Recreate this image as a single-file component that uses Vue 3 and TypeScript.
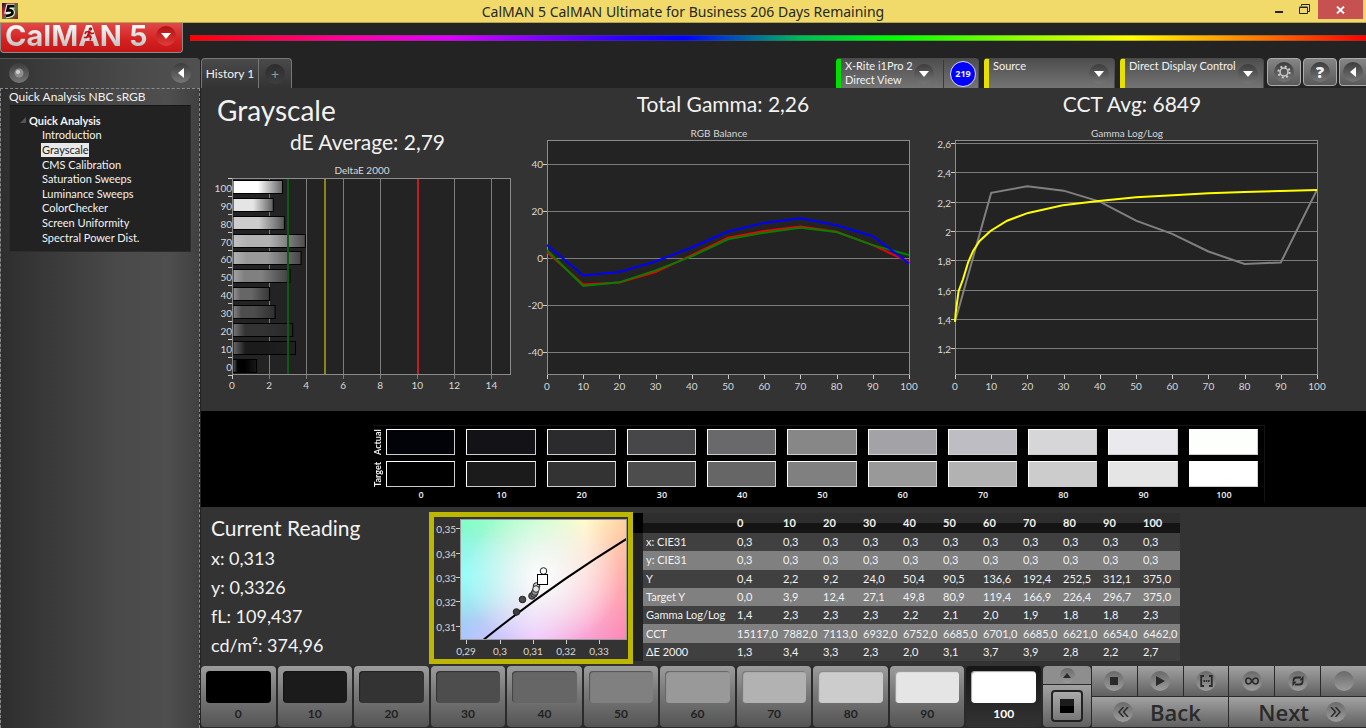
<script setup lang="ts">
interface Device {
  lines: string[]
  status: 'ready' | 'idle'
  badge?: string
}

interface Bar {
  level: number
  value: number
  color: string
}

const pages = [
  'Introduction',
  'Grayscale',
  'CMS Calibration',
  'Saturation Sweeps',
  'Luminance Sweeps',
  'ColorChecker',
  'Screen Uniformity',
  'Spectral Power Dist.',
]
const currentPage = 'Grayscale'

const devices: Device[] = [
  { lines: ['X-Rite i1Pro 2', 'Direct View'], status: 'ready', badge: '219' },
  { lines: ['Source'], status: 'idle' },
  { lines: ['Direct Display Control'], status: 'idle' },
]

const levels = [0, 10, 20, 30, 40, 50, 60, 70, 80, 90, 100]
const actual = ['#020308', '#131217', '#2b2b2d', '#474749', '#69696b', '#878788', '#a3a2a7', '#bebdc3', '#d6d6d8', '#eae9ee', '#fdfffc']
const target = ['#000000', '#1b1b1b', '#333333', '#4d4d4d', '#666666', '#808080', '#999999', '#b2b2b2', '#cccccc', '#e5e5e5', '#ffffff']

const rows: { name: string; values: string[] }[] = [
  { name: 'x: CIE31', values: levels.map(() => '0,3') },
  { name: 'y: CIE31', values: levels.map(() => '0,3') },
  { name: 'Y', values: ['0,4', '2,2', '9,2', '24,0', '50,4', '90,5', '136,6', '192,4', '252,5', '312,1', '375,0'] },
  { name: 'Target Y', values: ['0,0', '3,9', '12,4', '27,1', '49,8', '80,9', '119,4', '166,9', '226,4', '296,7', '375,0'] },
  { name: 'Gamma Log/Log', values: ['1,4', '2,3', '2,3', '2,3', '2,2', '2,1', '2,0', '1,9', '1,8', '1,8', '2,3'] },
  { name: 'CCT', values: ['15117,0', '7882,0', '7113,0', '6932,0', '6752,0', '6685,0', '6701,0', '6685,0', '6621,0', '6654,0', '6462,0'] },
  { name: 'ΔE 2000', values: ['1,3', '3,4', '3,3', '2,3', '2,0', '3,1', '3,7', '3,9', '2,8', '2,2', '2,7'] },
]

const readings = ['x: 0,313', 'y: 0,3326', 'fL: 109,437', 'cd/m²: 374,96']

/* Delta E bars: plot area 279 x 197, starting at (30, 23) */
const deltaE = [1.3, 3.4, 3.25, 2.3, 2.0, 3.1, 3.7, 3.93, 2.8, 2.2, 2.7]
const bars: Bar[] = levels.map((level, i) => ({ level, value: deltaE[i], color: target[i] })).reverse()
const deX = (v: number) => 30 + v * 18.53
const barY = (i: number) => Math.round(25 + i * 17.85)
const barEdge = (b: Bar) => {
  const gray = Math.round(88 + b.level * 1.5)
  return b.level > 70 ? b.color : `rgb(${gray}, ${gray}, ${gray})`
}

/* RGB balance: plot area 362 x 235, starting at (25, 19) */
const rgbX = (v: number) => 25 + v * 3.62
const rgbY = (v: number) => 137 - v * 2.34
const rgbTicks = [40, 20, 0, -20, -40]
const balance = {
  red: [2.5, -11.3, -10.5, -6, 1.2, 8.7, 11.5, 13.5, 11.2, 5.5, -1.7],
  green: [3.3, -12, -10.4, -5.3, 0.7, 8, 10.8, 12.9, 11.1, 5.5, 1.3],
  blue: [5.6, -7.5, -6, -1.5, 4.5, 11.3, 15, 17, 14, 9.3, -2.3],
}
const balanceLine = (values: number[]) => values.map((v, i) => `${rgbX(i * 10)},${rgbY(v)}`).join(' ')

/* Gamma: plot area 362 x 235, starting at (35, 19) */
const gmX = (v: number) => 35 + v * 3.62
const gmY = (v: number) => 22 + (2.6 - v) * 146.6
const gmTicks = [2.6, 2.4, 2.2, 2, 1.8, 1.6, 1.4, 1.2]
const gammaMeasured: [number, number][] = [
  [0, 1.38], [10, 2.26], [20, 2.305], [30, 2.275], [40, 2.2], [50, 2.07],
  [60, 1.98], [70, 1.86], [80, 1.775], [90, 1.785], [100, 2.28],
]
const gammaTarget: [number, number][] = [
  [0, 1.38], [0.2, 1.443], [1, 1.59], [2.2, 1.67], [3.6, 1.784], [5, 1.864], [6.8, 1.932], [9.8, 2.0], [14.4, 2.07],
  [20.2, 2.123], [29.8, 2.175], [39, 2.202], [50, 2.23], [60.2, 2.243], [70, 2.257], [80, 2.266], [90, 2.273], [100, 2.28],
]
const gammaLine = (points: [number, number][]) => points.map(([x, y]) => `${gmX(x)},${gmY(y)}`).join(' ')

const comma = (v: number) => String(v).replace('.', ',')

/* Chromaticity: plot area 167 x 121, starting at (26, 2) */
const cieX = [[0.29, 32], [0.3, 66], [0.31, 99], [0.32, 132], [0.33, 165]]
const cieY = [[0.35, 12], [0.34, 37], [0.33, 61], [0.32, 85], [0.31, 110]]
const ciePoints = [
  [82.5, 95, '#3c3c3c'], [88.5, 82.5, '#4b4b4b'], [98, 79, '#666666'], [100, 77, '#808080'],
  [101, 75, '#999999'], [102.5, 69, '#cccccc'], [102, 72, '#e5e5e5'], [109.5, 54, '#ffffff'],
]
</script>

<template>
  <div class="app">
    <header class="titlebar">
      <svg class="app-icon" viewBox="0 0 16 16" aria-hidden="true">
        <defs>
          <linearGradient id="appicon" x1="0" y1="0" x2="1" y2="1">
            <stop offset="0" stop-color="#26122a" />
            <stop offset="0.35" stop-color="#b8274c" />
            <stop offset="0.6" stop-color="#4f7a3a" />
            <stop offset="1" stop-color="#8c1620" />
          </linearGradient>
        </defs>
        <rect width="16" height="16" fill="url(#appicon)" />
        <path d="M12.500 3.200H6.500L5.500 7.500q5-1 5 2T4 12.800" fill="none" stroke="#e8f0dc" stroke-width="5" />
        <path d="M12.500 3.200H6.500L5.500 7.500q5-1 5 2T4 12.800" fill="none" stroke="#080808" stroke-width="2.800" />
      </svg>
      <h1 class="window-title">CalMAN 5 CalMAN Ultimate for Business 206 Days Remaining</h1>
      <div class="window-controls">
        <button class="win-btn" aria-label="Minimize"><svg width="10" height="12" viewBox="0 0 10 12"><path d="M1 7h8v2H1z" fill="#222" /></svg></button>
        <button class="win-btn" aria-label="Restore">
          <svg width="12" height="12" viewBox="0 0 12 12"><path d="M2.500 2V.5h8v7H9" fill="none" stroke="#222" /><path d="M.5 3.500h8v6h-8zM.5 3h8" fill="none" stroke="#222" /></svg>
        </button>
        <button class="win-btn close" aria-label="Close"><svg width="9" height="8" viewBox="0 0 9 8"><path d="M1 .5l7 7M8 .5l-7 7" stroke="#fff" stroke-width="1.800" /></svg></button>
      </div>
    </header>

    <div class="brandbar">
      <button class="logo" aria-label="CalMAN 5 menu">
        <span class="logo-text">CalMAN</span>
        <span class="logo-text">5</span>
        <svg class="runner" viewBox="0 0 12 14" aria-hidden="true">
          <circle cx="7.500" cy="2" r="1.700" fill="#b01216" />
          <path d="M6.500 4.500L5 8l3 2-1 3.500M5 8l-1.500 2.500H.8M6.500 4.500L3 5 1.800 7M6.500 4.500l2 2.200 2.500-.7" fill="none" stroke="#b01216" stroke-width="1.500" />
        </svg>
        <span class="round logo-drop"><svg width="10" height="6" viewBox="0 0 10 6"><path d="M0 0h10L5 6z" fill="#fff" /></svg></span>
      </button>
      <div class="spectrum"></div>
    </div>

    <div class="workspace">
      <aside class="sidebar">
        <div class="side-head">
          <button class="round" aria-label="Record"><svg width="10" height="10" viewBox="0 0 10 10"><circle cx="5" cy="5" r="4.500" fill="#8f8f8f" /><circle cx="4" cy="4" r="2" fill="#d2d2d2" /></svg></button>
          <button class="round" aria-label="Collapse panel"><svg width="6" height="10" viewBox="0 0 6 10"><path d="M6 0v10L0 5z" fill="#fff" /></svg></button>
        </div>
        <div class="side-body">
          <h2 class="side-title">Quick Analysis NBC sRGB</h2>
          <nav class="tree" aria-label="Workflow">
            <div class="tree-root"><svg width="6" height="6" viewBox="0 0 6 6"><path d="M6 0v6H0z" fill="#555" /></svg>Quick Analysis</div>
            <ul>
              <li v-for="page in pages" :key="page"><a href="#" :class="{ current: page === currentPage }">{{ page }}</a></li>
            </ul>
          </nav>
        </div>
      </aside>

      <main class="main">
        <div class="tabbar">
          <div class="tabs">
            <button class="tab">History 1</button>
            <button class="tab add" aria-label="Add tab"><span class="round dark">+</span></button>
          </div>
          <div class="devices">
            <div v-for="(d, i) in devices" :key="i" class="device" :class="[d.status, `device-${i}`]">
              <span class="device-name"><span v-for="l in d.lines" :key="l">{{ l }}</span></span>
              <button class="round drop" :aria-label="`${d.lines[0]} menu`"><svg width="10" height="6" viewBox="0 0 10 6"><path d="M0 0h10L5 6z" fill="#fff" /></svg></button>
              <span v-if="d.badge" class="badge-box"><span class="badge">{{ d.badge }}</span></span>
            </div>
          </div>
          <div class="tools">
            <button class="tool" aria-label="Settings">
              <span class="round"><svg width="14" height="14" viewBox="0 0 14 14"><circle cx="7" cy="7" r="4" fill="none" stroke="#ccc" stroke-width="1.500" /><circle cx="7" cy="7" r="5.600" fill="none" stroke="#ccc" stroke-width="2" stroke-dasharray="2 2.398" /></svg></span>
            </button>
            <button class="tool" aria-label="Help"><span class="round help">?</span></button>
            <button class="tool last" aria-label="Collapse"><span class="round"><svg width="6" height="10" viewBox="0 0 6 10"><path d="M6 0v10L0 5z" fill="#fff" /></svg></span></button>
          </div>
        </div>

        <section class="charts">
          <div class="chart">
            <h2 class="page-title">Grayscale</h2>
            <h3 class="metric metric-de">dE Average: 2,79</h3>
            <svg viewBox="-1 0 321 256" role="img" aria-label="DeltaE 2000">
              <defs>
                <linearGradient v-for="(b, i) in bars" :id="`bar${i}`" :key="i">
                  <stop offset="0" :stop-color="barEdge(b)" />
                  <stop offset="0.2" :stop-color="b.color" />
                  <stop offset="0.5" :stop-color="b.color" />
                  <stop offset="1" :stop-color="b.color" stop-opacity="0.3" />
                </linearGradient>
              </defs>
              <text x="160" y="19" class="label mid">DeltaE 2000</text>
              <rect x="30" y="23" width="279" height="197" fill="#232323" />
              <path v-for="v in [2, 4, 6, 8, 10, 12, 14]" :key="v" :d="`M${Math.round(deX(v)) + 0.5} 23v201`" stroke="#7c7c7c" />
              <g v-for="(b, i) in bars" :key="b.level">
                <rect x="31" :y="barY(i)" :width="b.value * 18.53" height="14" fill="#222" />
                <rect x="31" :y="barY(i) + 0.5" :width="b.value * 18.53 - 0.5" height="13" :fill="`url(#bar${i})`" stroke="#000" />
                <text x="30" :y="barY(i) + 12" class="label end">{{ b.level }}</text>
              </g>
              <path v-for="i in 12" :key="i" :d="`M26 ${Math.round(5 + i * 17.9) + 0.5}h4`" stroke="#ccc" />
              <path :d="`M${Math.round(deX(3))} 23v197`" stroke="#0e5a12" stroke-width="2" />
              <path :d="`M${Math.round(deX(5))} 23v197`" stroke="#8c8514" stroke-width="2" />
              <path :d="`M${Math.round(deX(10)) + 1} 23v197`" stroke="#c21e22" stroke-width="2" />
              <rect x="30.500" y="23.500" width="278" height="196" fill="none" stroke="#8c8c8c" />
              <text v-for="v in [0, 2, 4, 6, 8, 10, 12, 14]" :key="v" :x="deX(v)" y="234" class="label mid">{{ v }}</text>
              <path d="M30.500 220v4" stroke="#ccc" />
            </svg>
          </div>

          <div class="chart">
            <h3 class="metric metric-gamma">Total Gamma: 2,26</h3>
            <svg viewBox="0 0 398 290" role="img" aria-label="RGB Balance">
              <text x="197" y="16" class="label mid">RGB Balance</text>
              <rect x="25" y="19" width="363" height="235" fill="#232323" />
              <g v-for="v in rgbTicks" :key="v">
                <path :d="`M25 ${Math.round(rgbY(v)) + 0.5}h362`" stroke="#7c7c7c" />
                <path :d="`M21 ${Math.round(rgbY(v)) + 0.5}h4`" stroke="#ccc" />
                <text x="21" :y="rgbY(v) + 4" class="label end">{{ v }}</text>
              </g>
              <g v-for="v in levels" :key="v">
                <path :d="`M${Math.round(rgbX(v)) + 0.5} 254v4`" stroke="#ccc" />
                <text :x="rgbX(v)" y="269" class="label mid">{{ v }}</text>
              </g>
              <rect x="25.500" y="19.500" width="362" height="234" fill="none" stroke="#8c8c8c" />
              <polyline :points="balanceLine(balance.red)" class="series" stroke="#f00000" />
              <polyline :points="balanceLine(balance.green)" class="series" stroke="#008000" />
              <polyline :points="balanceLine(balance.blue)" class="series" stroke="#0000ff" />
            </svg>
          </div>

          <div class="chart">
            <h3 class="metric metric-cct">CCT Avg: 6849</h3>
            <svg viewBox="0 0 446 290" role="img" aria-label="Gamma Log/Log">
              <text x="207" y="16" class="label mid">Gamma Log/Log</text>
              <rect x="35" y="19" width="363" height="235" fill="#232323" />
              <g v-for="v in gmTicks" :key="v">
                <path :d="`M35 ${Math.round(gmY(v)) + 0.5}h362`" stroke="#7c7c7c" />
                <path :d="`M31 ${Math.round(gmY(v)) + 0.5}h4`" stroke="#ccc" />
                <text x="31" :y="gmY(v) + 5" class="label end">{{ comma(v) }}</text>
              </g>
              <g v-for="v in levels" :key="v">
                <path :d="`M${Math.round(gmX(v)) + 0.5} 254v4`" stroke="#ccc" />
                <text :x="gmX(v)" y="269" class="label mid">{{ v }}</text>
              </g>
              <rect x="35.500" y="19.500" width="362" height="234" fill="none" stroke="#8c8c8c" />
              <polyline :points="gammaLine(gammaMeasured)" class="series" stroke="#808080" />
              <polyline :points="gammaLine(gammaTarget)" class="series" stroke="#ffff00" />
            </svg>
          </div>
        </section>

        <section class="swatches" aria-label="Actual and target swatches">
          <div class="swatch-grid">
            <span class="side-label">Actual</span>
            <span v-for="(c, i) in actual" :key="`a${i}`" class="swatch" :style="{ background: c }"></span>
            <span class="side-label">Target</span>
            <span v-for="(c, i) in target" :key="`t${i}`" class="swatch" :style="{ background: c }"></span>
            <span></span>
            <span v-for="l in levels" :key="l" class="level">{{ l }}</span>
          </div>
        </section>

        <section class="details">
          <div class="reading">
            <h3>Current Reading</h3>
            <p v-for="r in readings" :key="r">{{ r }}</p>
          </div>

          <div class="cie">
            <svg viewBox="0 0 194 142" role="img" aria-label="CIE chromaticity">
              <defs>
                <linearGradient id="cieTop"><stop offset="0" stop-color="#7fffc8" /><stop offset="0.4" stop-color="#b8ffcc" /><stop offset="0.75" stop-color="#fffccb" /><stop offset="1" stop-color="#ffd0a0" /></linearGradient>
                <linearGradient id="cieBottom"><stop offset="0" stop-color="#a8c4ff" /><stop offset="0.45" stop-color="#f0c4ff" /><stop offset="1" stop-color="#ff84b4" /></linearGradient>
                <linearGradient id="cieFade" x1="0" y1="0" x2="0" y2="1"><stop offset="0" stop-color="#000" /><stop offset="1" stop-color="#fff" /></linearGradient>
                <radialGradient id="cieWhite"><stop offset="0" stop-color="#fff" /><stop offset="0.2" stop-color="#fff" stop-opacity="0.75" /><stop offset="1" stop-color="#fff" stop-opacity="0" /></radialGradient>
                <radialGradient id="cieCyan"><stop offset="0" stop-color="#98fffa" /><stop offset="1" stop-color="#98fffa" stop-opacity="0" /></radialGradient>
                <mask id="cieMask"><rect x="26" y="2" width="167" height="121" fill="url(#cieFade)" /></mask>
                <clipPath id="cieClip"><rect x="27" y="3" width="165" height="119" /></clipPath>
              </defs>
              <rect x="26" y="2" width="167" height="121" fill="url(#cieTop)" />
              <rect x="26" y="2" width="167" height="121" fill="url(#cieBottom)" mask="url(#cieMask)" />
              <g clip-path="url(#cieClip)">
                <ellipse cx="26" cy="58" rx="70" ry="48" fill="url(#cieCyan)" />
                <ellipse cx="108" cy="60" rx="78" ry="72" fill="url(#cieWhite)" />
                <path d="M48 124Q116 69 194 21" fill="none" stroke="#000" stroke-width="2" />
              </g>
              <rect x="26.500" y="2.500" width="166" height="120" fill="none" stroke="#999" />
              <circle v-for="(p, i) in ciePoints" :key="i" :cx="p[0]" :cy="p[1]" r="3.300" :fill="String(p[2])" stroke="#222" />
              <rect x="103.500" y="57.500" width="10" height="10" fill="#fff" stroke="#000" />
              <g v-for="t in cieX" :key="`x${t[0]}`">
                <path :d="`M${t[1] + 0.5} 123v4`" stroke="#ccc" />
                <text :x="t[1]" y="138" class="label mid">{{ comma(t[0]) }}</text>
              </g>
              <g v-for="t in cieY" :key="`y${t[0]}`">
                <path :d="`M22 ${t[1] - 0.5}h4`" stroke="#ccc" />
                <text x="22" :y="t[1] + 4" class="label end">{{ comma(t[0]) }}</text>
              </g>
            </svg>
          </div>

          <table class="data">
            <thead>
              <tr><th class="sel"></th><th class="name"></th><th v-for="l in levels" :key="l" scope="col">{{ l }}</th></tr>
            </thead>
            <tbody>
              <tr v-for="r in rows" :key="r.name">
                <td class="sel"></td>
                <th scope="row">{{ r.name }}</th>
                <td v-for="(v, i) in r.values" :key="i">{{ v }}</td>
              </tr>
            </tbody>
          </table>
        </section>

        <footer class="footer">
          <div class="patterns">
            <button v-for="(l, i) in levels" :key="l" class="pattern" :class="{ active: l === 100 }">
              <span class="chip" :style="{ background: target[i] }"></span>
              <span class="pattern-label">{{ l }}</span>
            </button>
          </div>
          <div class="target-col">
            <button class="cell up" aria-label="Expand"><span class="round small"><svg width="8" height="5" viewBox="0 0 8 5"><path d="M0 5h8L4 0z" fill="#2a2a2a" /></svg></span></button>
            <button class="cell stopbox" aria-label="Pattern window"><span class="window-icon"></span></button>
          </div>
          <div class="transport">
            <button class="cell" aria-label="Stop"><span class="round light"><svg width="8" height="8" viewBox="0 0 8 8"><path d="M0 0h8v8H0z" fill="#2a2a2a" /></svg></span></button>
            <button class="cell" aria-label="Play"><span class="round light"><svg width="9" height="10" viewBox="0 0 9 10"><path d="M0 0l9 5-9 5z" fill="#2a2a2a" /></svg></span></button>
            <button class="cell" aria-label="Read range"><span class="round light"><svg width="13" height="12" viewBox="0 0 13 12"><path d="M4 1H1.200v10H4M9 1h2.800v10H9M3.500 6h1.500M5.800 6h1.500M8.100 6h1.500" fill="none" stroke="#2a2a2a" stroke-width="1.800" /></svg></span></button>
            <button class="cell" aria-label="Continuous"><span class="round light"><svg width="14" height="8" viewBox="0 0 14 8"><path d="M7 4C5.500 1.500 4.500 1 3.500 1a2.700 3 0 0 0 0 6C4.500 7 5.500 6.500 7 4s2.500-3 3.500-3a2.700 3 0 0 1 0 6C9.500 7 8.500 6.500 7 4z" fill="none" stroke="#2a2a2a" stroke-width="1.600" /></svg></span></button>
            <button class="cell" aria-label="Refresh"><span class="round light"><svg width="12" height="12" viewBox="0 0 12 12"><path d="M1.500 6.500V5a3 3 0 0 1 3-2.500H9M10.500 5.500V7a3 3 0 0 1-3 2.500H3" fill="none" stroke="#2a2a2a" stroke-width="1.800" /><path d="M7.500 5.500h4v-5zM4.500 6.500h-4v5z" fill="#2a2a2a" /></svg></span></button>
            <button class="cell" aria-label="Record pattern"><span class="round light"></span></button>
            <button class="cell wide back"><span class="round light"><svg width="11" height="10" viewBox="0 0 11 10"><path d="M5.500 0L1 5l4.500 5M10 0L5.500 5l4.500 5" fill="none" stroke="#2a2a2a" stroke-width="1.500" /></svg></span>Back</button>
            <button class="cell wide next">Next<span class="round light"><svg width="11" height="10" viewBox="0 0 11 10"><path d="M1 0l4.500 5L1 10M5.500 0L10 5l-4.500 5" fill="none" stroke="#2a2a2a" stroke-width="1.500" /></svg></span></button>
          </div>
        </footer>
      </main>
    </div>
  </div>
</template>

<style>
body {
  margin: 0;
  background: #232323;
}
</style>

<style scoped>
.app {
  display: flex;
  flex-direction: column;
  min-height: 100vh;
  background: #232323;
  color: #f2f2f2;
  font-family: Lato, 'Open Sans', sans-serif;
  font-size: 11px;
}

button {
  margin: 0;
  padding: 0;
  border: 0;
  background: none;
  color: inherit;
  font: inherit;
}

h1,
h2,
h3,
p,
ul {
  margin: 0;
  padding: 0;
  font-weight: 400;
}

svg {
  display: block;
}

/* window title */
.titlebar {
  display: grid;
  grid-template-columns: 110px 1fr 110px;
  align-items: start;
  height: 22px;
  background: #f1da69;
  border-bottom: 1px solid #b5a450;
  color: #262626;
}

.app-icon {
  width: 16px;
  height: 16px;
  margin: 3px 0 0 2px;
}

.window-title {
  font-family: 'Noto Sans', 'Open Sans', sans-serif;
  font-size: 14px;
  line-height: 23px;
  text-align: center;
  white-space: nowrap;
}

.window-controls {
  display: flex;
  justify-content: flex-end;
  padding-right: 3px;
}

.win-btn {
  display: flex;
  justify-content: center;
  padding-top: 4px;
  width: 26px;
  height: 19px;
}

.win-btn.close {
  align-items: center;
  padding: 0;
  width: 45px;
  background: #c75050;
}

/* brand */
.brandbar {
  display: flex;
  gap: 7px;
  height: 35px;
}

.logo {
  position: relative;
  display: flex;
  align-items: center;
  gap: 7px;
  box-sizing: border-box;
  width: 183px;
  height: 30px;
  padding: 0 6px 4px 4px;
  border: 1px solid #8b8b8b;
  border-top: 0;
  border-radius: 0 0 4px 4px;
  background: linear-gradient(#e04a4a, #d42020 60%, #c41616);
}

.logo-text {
  font-family: Inter, 'Liberation Sans', sans-serif;
  font-size: 29px;
  font-weight: 700;
  line-height: 26px;
  color: transparent;
  background: linear-gradient(#ffffff, #d8d8d8 60%, #b9b9b9);
  background-clip: text;
}

.runner {
  position: absolute;
  left: 82px;
  top: 4px;
  width: 12px;
  height: 14px;
}

.logo-drop {
  margin-left: auto;
}

.logo .round {
  background: linear-gradient(#b01010, #e03c3c);
}

.spectrum {
  flex: 1;
  box-sizing: border-box;
  height: 6px;
  margin-top: 12px;
  border: 1px solid rgba(80, 80, 80, 0.4);
  border-width: 1px 0;
  background: linear-gradient(90deg, #f00 0%, #f09 13%, #d0f 22%, #30f 36%, #00f 42%, #0b5 52%, #0f0 60%, #8f0 70%, #ff0 80%, #f70 91%, #f00 100%);
}

.round {
  display: inline-flex;
  flex: none;
  align-items: center;
  justify-content: center;
  width: 20px;
  height: 20px;
  border-radius: 50%;
  background: linear-gradient(#3c3c3c, #767676);
}

/* sidebar */
.workspace {
  display: flex;
  flex: 1;
}

.sidebar {
  display: flex;
  flex-direction: column;
  width: 200px;
  flex: none;
}

.side-head {
  display: flex;
  justify-content: space-between;
  align-items: center;
  box-sizing: border-box;
  height: 30px;
  padding: 0 9px 2px;
  border-top: 1px solid #555;
  border-radius: 0 4px 0 0;
  background: linear-gradient(90deg, #333, #4b4b4b 70%, #505050);
}

.side-body {
  flex: 1;
  box-sizing: border-box;
  padding: 0 8px;
  border: 1px dashed #8a8a8a;
  border-bottom: 0;
  background: linear-gradient(90deg, #2e2e2e, #4a4a4a 60%, #4e4e4e 85%, #404040);
}

.side-title {
  font-size: 12px;
  line-height: 16px;
  white-space: nowrap;
}

.tree {
  height: 147px;
  box-sizing: border-box;
  padding: 6px 0 0 10px;
  background: #222;
  border: 1px solid #2c2c2c;
  border-top-color: #161616;
}

.tree-root {
  display: flex;
  align-items: center;
  gap: 3px;
  height: 16px;
  font-weight: 700;
}

.tree ul {
  display: grid;
  grid-auto-rows: 1fr;
  height: 117px;
  padding-left: 21px;
  list-style: none;
}

.tree li {
  display: flex;
  align-items: center;
}

.tree a {
  padding-left: 1px;
  line-height: 14px;
  color: inherit;
  text-decoration: none;
}

.tree a.current {
  background: #e9e9e9;
  color: #222;
}

/* tab bar */
.main {
  display: flex;
  flex: 1;
  flex-direction: column;
  min-width: 0;
  padding-left: 1px;
}

.tabbar {
  display: flex;
  height: 30px;
}

.tabs {
  display: flex;
  flex: 1;
}

.tab {
  box-sizing: border-box;
  width: 58px;
  border: 1px solid #777;
  border-bottom: 0;
  border-radius: 4px 0 0;
  background: linear-gradient(#4a4a4a, #333);
  font-size: 12px;
  white-space: nowrap;
}

.tab.add {
  width: 33px;
  border-left: 0;
  border-radius: 0 4px 0 0;
}

.round.dark {
  background: linear-gradient(#2c2c2c, #3e3e3e);
  color: #999;
  font-size: 14px;
}

.devices {
  display: flex;
  gap: 5px;
}

.device {
  display: flex;
  align-items: center;
  box-sizing: border-box;
  width: 131px;
  padding-left: 4px;
  border: 1px solid #4a4a4a;
  border-bottom: 0;
  border-left: 5px solid #e8e000;
  border-radius: 4px 4px 0 0;
  background: linear-gradient(#4e4e4e, #747474);
}

.device.ready {
  border-left-color: #00e000;
}

.device-0 {
  width: 143px;
}

.device-2 {
  width: 144px;
}

.device-name {
  display: flex;
  flex: 1;
  flex-direction: column;
  align-self: flex-start;
  line-height: 14px;
  white-space: nowrap;
}

.drop {
  margin-right: 5px;
}

.device-0 .drop {
  margin-right: 9px;
}

.badge-box {
  display: flex;
  align-items: center;
  height: 28px;
  padding: 0 2px 0 6px;
  border-left: 1px solid #3a3a3a;
}

.badge {
  box-sizing: border-box;
  width: 26px;
  height: 26px;
  border: 1px solid #dcdcff;
  border-radius: 50%;
  background: #00f;
  font-family: 'Open Sans', sans-serif;
  font-size: 9px;
  font-weight: 700;
  line-height: 24px;
  text-align: center;
}

.tools {
  display: flex;
  gap: 2px;
  padding-left: 3px;
}

.tool {
  display: flex;
  align-items: center;
  justify-content: center;
  box-sizing: border-box;
  width: 34px;
  height: 28px;
  border: 1px solid #aaa;
  border-radius: 4px;
  background: linear-gradient(#858585, #5a5a5a);
}

.tool.last {
  width: 27px;
  border-right: 0;
  border-radius: 4px 0 0 4px;
}

.help {
  font-family: 'Open Sans', sans-serif;
  font-size: 16px;
  font-weight: 800;
}

/* charts */
.charts {
  display: grid;
  grid-template-columns: 321fr 398fr 446fr;
  background: #333;
}

.page-title {
  padding-left: 16px;
  font-size: 28px;
  line-height: 44px;
}

.metric {
  padding-bottom: 2px;
  font-size: 21px;
  line-height: 31px;
  text-align: center;
}

.metric-de {
  padding-bottom: 3px;
  padding-left: 12px;
  line-height: 20px;
}

.metric-gamma {
  padding-left: 4px;
}

.metric-cct {
  padding-right: 22px;
}

.label {
  fill: #d8d8d8;
  font-size: 10px;
}

.mid {
  text-anchor: middle;
}

.end {
  text-anchor: end;
}

.series {
  fill: none;
  stroke-width: 2;
}

/* swatches */
.swatches {
  padding: 14px 101px 5px 172px;
  background: #000;
}

.swatch-grid {
  display: grid;
  grid-template-columns: 8px repeat(11, 1fr);
  grid-template-rows: 32px 27px 14px;
  padding-top: 3px;
  border-top: 1px solid #141414;
  border-right: 1px solid #141414;
}

.swatch {
  box-sizing: border-box;
  height: 26px;
  margin: 0 6px 0 5px;
  border: 1px solid #fff;
  border-color: #fff #ccc #ccc #fff;
}

.side-label {
  display: flex;
  align-items: center;
  justify-content: center;
  height: 26px;
  writing-mode: vertical-rl;
  rotate: 180deg;
  font-size: 9px;
  font-weight: 700;
}

.level {
  font-family: 'Open Sans', sans-serif;
  font-size: 9px;
  font-weight: 600;
  line-height: 14px;
  text-align: center;
}

/* details */
.details {
  display: flex;
  flex: 1;
  box-sizing: border-box;
  padding: 5px 0 2px;
  background: #333;
}

.reading {
  width: 218px;
  padding-left: 10px;
  font-size: 18px;
  line-height: 29px;
}

.reading h3 {
  font-size: 21px;
  line-height: 32px;
}

.cie {
  width: 194px;
  height: 142px;
  border: 5px solid #bdb700;
}

.data {
  height: 148px;
  margin-top: 1px;
  border-collapse: collapse;
  table-layout: fixed;
  width: 547px;
  white-space: nowrap;
}

.data th,
.data td {
  box-sizing: border-box;
  width: 40px;
  padding: 0 0 0 3px;
  font-weight: 400;
  line-height: 16px;
  text-align: left;
}

.data thead th {
  font-weight: 700;
}

.data thead tr {
  height: 20px;
  background: linear-gradient(#2e2e2e 50%, #141414 50%);
}

.data .sel {
  width: 10px;
  background: #222;
}

.data thead .sel {
  background: #000;
}

.data thead .name {
  width: 91px;
}

.data thead th:nth-child(3) {
  width: 46px;
}

.data tbody tr {
  background: #404040;
}

.data tbody tr:nth-child(even) {
  background: #808080;
}

/* footer */
.footer {
  display: flex;
  height: 62px;
  background: #2a2a2a;
}

.patterns {
  display: grid;
  grid-template-columns: repeat(11, 1fr);
  flex: 1;
  gap: 2px;
}

.pattern {
  display: flex;
  flex-direction: column;
  align-items: center;
  height: 61px;
  padding: 5px;
  box-sizing: border-box;
  border-radius: 4px;
  background: linear-gradient(#9c9c9c, #7c7c7c 40%, #545454);
  color: #222;
  font-size: 12px;
  font-weight: 700;
}

.pattern.active {
  background: linear-gradient(#161616, #333);
  color: #fff;
}

.chip {
  align-self: stretch;
  height: 36px;
  border-radius: 4px;
  box-shadow: inset 1px 1px 1px rgba(0, 0, 0, 0.35);
}

.pattern-label {
  padding-top: 3px;
  line-height: 16px;
}

.cell {
  display: flex;
  align-items: center;
  justify-content: center;
  background: linear-gradient(#a2a2a2, #606060);
}

.target-col {
  display: grid;
  grid-template-rows: 18px 42px;
  gap: 1px;
  width: 48px;
  margin: 0 1px 0 2px;
}

.target-col .up {
  border-radius: 4px 4px 0 0;
  background: #8e8e8e;
}

.target-col .stopbox {
  border-radius: 0 0 4px 4px;
}

.round.small {
  width: 15px;
  height: 15px;
  background: linear-gradient(#6a6a6a, #999);
}

.round.light {
  background: linear-gradient(#6a6a6a, #9c9c9c);
}

.window-icon {
  box-sizing: border-box;
  width: 32px;
  height: 32px;
  border: 2px solid #222;
  border-radius: 4px;
  background: linear-gradient(#1c1c1c 50%, #000 50%) center / 14px 14px no-repeat, linear-gradient(#aaa, #777);
}

.transport {
  display: grid;
  grid-template-columns: repeat(6, 1fr);
  grid-template-rows: 30px 30px;
  gap: 1px;
  width: 274px;
}

.wide {
  grid-column: span 3;
  gap: 17px;
  color: #2a2a2a;
  font-family: 'Open Sans', sans-serif;
  font-size: 22px;
  font-weight: 600;
}

.back {
  justify-content: flex-start;
  padding-left: 21px;
}

.next {
  justify-content: flex-end;
  padding-right: 20px;
}
</style>
